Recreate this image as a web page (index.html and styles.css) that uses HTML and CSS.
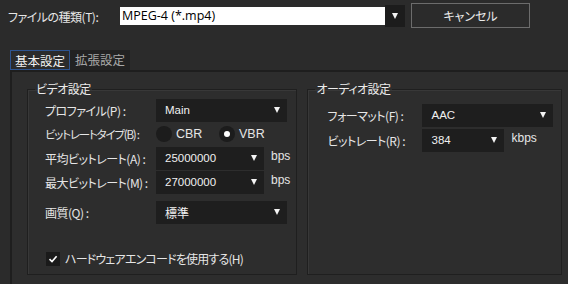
FILE: index.html
```html
<!DOCTYPE html>
<html lang="ja">

<head>
  <meta charset="UTF-8">
  <meta name="viewport" content="width=device-width, initial-scale=1.0">
  <title>出力設定</title>
  <link rel="stylesheet" href="styles.css">
</head>

<body>
  <div class="top">
    <span class="top-label">ファイルの種類(T):</span>
    <div class="file-combo">
      <span class="file-value">MPEG-4 (*.mp4)</span>
      <span class="file-arrow"><i class="arrow"></i></span>
    </div>
    <button class="button">キャンセル</button>
  </div>

  <div class="tabs">
    <span class="tab active">基本設定</span>
    <span class="tab">拡張設定</span>
  </div>

  <div class="panel">
    <fieldset class="group video">
      <legend>ビデオ設定</legend>

      <div class="row">
        <span class="label">プロファイル(P) :</span>
        <div class="combo wide"><span>Main</span><i class="arrow"></i></div>
      </div>

      <div class="row">
        <span class="label tight">ビットレートタイプ(B) :</span>
        <span class="radio"></span><span class="radio-text">CBR</span>
        <span class="radio checked"></span><span class="radio-text">VBR</span>
      </div>

      <div class="row">
        <span class="label">平均ビットレート(A) :</span>
        <div class="combo narrow"><span>25000000</span><i class="arrow"></i></div>
        <span class="unit">bps</span>
      </div>

      <div class="row">
        <span class="label">最大ビットレート(M) :</span>
        <div class="combo narrow"><span>27000000</span><i class="arrow"></i></div>
        <span class="unit">bps</span>
      </div>

      <div class="row quality">
        <span class="label">画質(Q) :</span>
        <div class="combo wide"><span class="jp">標準</span><i class="arrow"></i></div>
      </div>

      <div class="check-row">
        <span class="checkbox">
          <svg width="10" height="10" viewBox="0 0 10 10"><path d="M1.5 5.2 L4 7.6 L8.6 2.2" fill="none" stroke="#fff" stroke-width="1.6"/></svg>
        </span>
        <span class="check-text">ハードウェアエンコードを使用する(H)</span>
      </div>
    </fieldset>

    <fieldset class="group audio">
      <legend>オーディオ設定</legend>

      <div class="row first">
        <span class="label">フォーマット(F) :</span>
        <div class="combo wide"><span>AAC</span><i class="arrow"></i></div>
      </div>

      <div class="row">
        <span class="label">ビットレート(R) :</span>
        <div class="combo small"><span>384</span><i class="arrow"></i></div>
        <span class="unit">kbps</span>
      </div>
    </fieldset>
  </div>
</body>

</html>
```

FILE: styles.css
```css
body {
  margin: 0;
  background-color: #2b2b2b;
  color: #e6e6e6;
  font-family: "Noto Sans CJK JP", "Liberation Sans", sans-serif;
  font-size: 12px;
  font-feature-settings: "palt";
  letter-spacing: -0.5px;
  height: 284px;
  overflow: hidden;
  white-space: nowrap;
}

.top {
  display: flex;
  align-items: center;
  height: 32px;
  padding-left: 8px;
}

.top-label {
  width: 112px;
  margin-top: 1px;
}

.file-combo {
  display: flex;
  width: 285px;
  height: 22px;
}

.file-value {
  flex: 1;
  margin: 2px 0;
  background-color: #fff;
  color: #000;
  font-family: "Open Sans", "Liberation Sans", sans-serif;
  font-size: 12.5px;
  letter-spacing: 0;
  line-height: 18px;
  padding-left: 2px;
}

.file-arrow {
  display: flex;
  align-items: center;
  justify-content: center;
  width: 20px;
  background-color: #1c1c1c;
}

.button {
  width: 119px;
  height: 25px;
  margin-left: 6px;
  margin-top: -1px;
  background-color: #2b2b2b;
  border: 1px solid #6c6c6c;
  color: #ececec;
  font-family: "Noto Sans CJK JP", sans-serif;
  font-size: 12px;
  font-feature-settings: "palt";
  padding: 0;
}

.tabs {
  display: flex;
  margin-top: 18px;
  padding-left: 10px;
  height: 20px;
}

.tab {
  width: 60px;
  box-sizing: border-box;
  text-align: center;
  line-height: 19px;
  background-color: #222;
  color: #a8a8a8;
  font-size: 12.5px;
  letter-spacing: 0;
}

.tab.active {
  background-color: #2b2b2b;
  border: 1px solid #2e5490;
  color: #f2f2f2;
}

.panel {
  display: flex;
  margin-left: 10px;
  border-top: 2px solid #1e1e1e;
  border-left: 2px solid #1e1e1e;
  background-color: #2d2d2d;
  height: 206px;
  padding: 10px 6px 0 15px;
  gap: 10px;
}

.group {
  margin: 0;
  padding: 0 0 0 17px;
  border: 1px solid #1f1f1f;
  box-shadow: inset 1px 1px 0 #383838;
  height: 193px;
  box-sizing: border-box;
}

.group legend {
  padding: 0 1px;
  margin-left: -10px;
  line-height: 14px;
  font-size: 12px;
  color: #ececec;
}

.video {
  width: 271px;
}

.audio {
  width: 255px;
  padding-left: 19px;
}

.audio legend {
  margin-left: -12px;
}

.video .row:first-of-type {
  margin-top: 2px;
}

.row {
  display: flex;
  align-items: center;
  height: 24px;
}

.label {
  width: 111px;
  flex-shrink: 0;
}

.label.tight {
  font-size: 11.5px;
  letter-spacing: -1.2px;
}

.audio .label {
  width: 95px;
}

.audio .row.first {
  margin-top: 7px;
}

.audio .row.first + .row {
  margin-top: 1px;
}

.row.quality {
  margin-top: 6px;
}

.combo {
  display: flex;
  align-items: center;
  justify-content: space-between;
  height: 23px;
  box-sizing: border-box;
  padding: 0 7px 0 9px;
  background-color: #1e1e1e;
  font-family: "Liberation Sans", sans-serif;
  font-size: 11.5px;
  letter-spacing: 0;
  color: #f0f0f0;
}

.combo .jp {
  font-family: "Noto Sans CJK JP", sans-serif;
  font-size: 12px;
}

.combo.wide {
  width: 131px;
}

.combo.narrow {
  width: 108px;
}

.combo.small {
  width: 82px;
}

.arrow {
  width: 0;
  height: 0;
  border-left: 3.5px solid transparent;
  border-right: 3.5px solid transparent;
  border-top: 6px solid #f4f4f4;
}

.unit {
  margin-left: 7px;
  margin-top: -4px;
  font-family: "Liberation Sans", sans-serif;
  font-size: 12px;
  letter-spacing: 0;
}

.radio {
  position: relative;
  width: 16px;
  height: 16px;
  border-radius: 50%;
  background-color: #1c1c1c;
}

.radio.checked::after {
  content: "";
  position: absolute;
  left: 5px;
  top: 5px;
  width: 6px;
  height: 6px;
  border-radius: 50%;
  background-color: #fff;
}

.radio-text {
  margin-left: 4px;
  width: 43px;
  font-family: "Liberation Sans", sans-serif;
  font-size: 12.5px;
  letter-spacing: 0;
}

.check-row {
  display: flex;
  align-items: center;
  gap: 5px;
  margin-top: 26px;
  margin-left: 1px;
}

.check-text {
  letter-spacing: -0.8px;
}

.checkbox {
  display: flex;
  align-items: center;
  justify-content: center;
  width: 14px;
  height: 14px;
  background-color: #1a1a1a;
}
```
